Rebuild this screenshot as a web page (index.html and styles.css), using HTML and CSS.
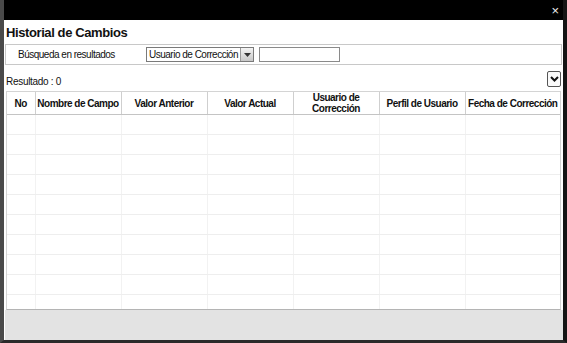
FILE: index.html
```html
<!DOCTYPE html>
<html>
<head>
<meta charset="utf-8">
<link rel="stylesheet" href="styles.css">
</head>
<body>
<div class="frame">
  <div class="titlebar"><span class="close">×</span></div>
  <div class="content">
    <h1 class="title">Historial de Cambios</h1>
    <div class="search">
      <span class="search-label">Búsqueda en resultados</span>
      <div class="select">
        <span class="select-text">Usuario de Corrección</span>
        <span class="select-btn"><svg width="7" height="4" viewBox="0 0 7 4"><path d="M0 0h7L3.5 4z" fill="#333"/></svg></span>
      </div>
      <div class="input"></div>
    </div>
    <div class="result-row">
      <span class="result">Resultado : 0</span>
      <span class="toggle"><svg width="9" height="6" viewBox="0 0 9 6"><path d="M1 1l3.5 3.5L8 1" stroke="#111" stroke-width="2" fill="none"/></svg></span>
    </div>
    <div class="grid-wrap">
      <table class="grid">
        <colgroup>
          <col class="c-no"><col class="c-w"><col class="c-w"><col class="c-w"><col class="c-w"><col class="c-w"><col>
        </colgroup>
        <thead>
          <tr><th>No</th><th>Nombre de Campo</th><th>Valor Anterior</th><th>Valor Actual</th><th>Usuario de<br>Corrección</th><th>Perfil de Usuario</th><th>Fecha de Corrección</th></tr>
        </thead>
        <tbody>
          <tr><td></td><td></td><td></td><td></td><td></td><td></td><td></td></tr>
          <tr><td></td><td></td><td></td><td></td><td></td><td></td><td></td></tr>
          <tr><td></td><td></td><td></td><td></td><td></td><td></td><td></td></tr>
          <tr><td></td><td></td><td></td><td></td><td></td><td></td><td></td></tr>
          <tr><td></td><td></td><td></td><td></td><td></td><td></td><td></td></tr>
          <tr><td></td><td></td><td></td><td></td><td></td><td></td><td></td></tr>
          <tr><td></td><td></td><td></td><td></td><td></td><td></td><td></td></tr>
          <tr><td></td><td></td><td></td><td></td><td></td><td></td><td></td></tr>
          <tr><td></td><td></td><td></td><td></td><td></td><td></td><td></td></tr>
          <tr><td></td><td></td><td></td><td></td><td></td><td></td><td></td></tr>
        </tbody>
      </table>
    </div>
    <div class="footer"></div>
  </div>
</div>
</body>
</html>
```
FILE: styles.css
```css
html, body {
  margin: 0;
  padding: 0;
  background: #1a1a1a;
}
body {
  width: 567px;
  height: 343px;
  overflow: hidden;
  font-family: "Liberation Sans", Arial, sans-serif;
}
.frame {
  box-sizing: border-box;
  height: 343px;
  display: flex;
  flex-direction: column;
  border-left: 4px solid #4a4a4a;
  border-right: 4px solid #151515;
  border-bottom: 3px solid #2a2a2a;
}
.titlebar {
  height: 20px;
  background: #000;
  display: flex;
  justify-content: flex-end;
  align-items: center;
  padding-right: 4px;
}
.close {
  color: #eee;
  font-size: 13px;
  line-height: 13px;
}
.content {
  flex: 1;
  background: #fff;
  display: flex;
  flex-direction: column;
  padding: 0 0 0 1px;
}
.title {
  margin: 4px 0 0 1px;
  font-size: 13px;
  font-weight: bold;
  line-height: 18px;
  color: #111;
  letter-spacing: -0.4px;
}
.search {
  margin: 2px 1px 0 0;
  height: 21px;
  box-sizing: border-box;
  border: 1px solid #c8c8c8;
  display: flex;
  align-items: center;
  font-size: 10px;
  color: #111;
}
.search-label {
  width: 128px;
  padding-left: 12px;
  letter-spacing: -0.5px;
  white-space: nowrap;
}
.select {
  display: flex;
  height: 15px;
  box-sizing: border-box;
  border: 1px solid #7a7a7a;
  align-items: stretch;
}
.select-text {
  width: 91px;
  padding-left: 2px;
  line-height: 13px;
  letter-spacing: -0.5px;
  white-space: nowrap;
  overflow: hidden;
}
.select-btn {
  width: 12px;
  background: linear-gradient(#f4f4f4, #c8c8c8);
  border-left: 1px solid #999;
  display: flex;
  align-items: center;
  justify-content: center;
}
.input {
  margin-left: 5px;
  width: 81px;
  height: 15px;
  box-sizing: border-box;
  border: 1px solid #8a8a8a;
}
.result-row {
  display: flex;
  justify-content: space-between;
  align-items: center;
  margin-top: 5px;
  height: 18px;
  padding-right: 2px;
}
.result {
  font-size: 10px;
  color: #111;
  margin-left: 1px;
  margin-top: 5px;
  letter-spacing: -0.3px;
}
.toggle {
  width: 14px;
  height: 16px;
  margin-top: -1px;
  box-sizing: border-box;
  border: 1px solid #555;
  border-radius: 2px;
  background: #fafafa;
  display: flex;
  align-items: center;
  justify-content: center;
}
.grid-wrap {
  margin: 3px 2px 0 1px;
  height: 219px;
  overflow: hidden;
  border: 1px solid #d4d4d4;
  border-bottom: 1px solid #b4b4b4;
  box-sizing: border-box;
}
.grid {
  width: 100%;
  border-collapse: collapse;
  table-layout: fixed;
}
.c-no { width: 28px; }
.c-w { width: 86px; }
.grid th {
  height: 21px;
  padding: 0;
  font-size: 10px;
  font-weight: bold;
  color: #111;
  line-height: 11px;
  text-align: center;
  border-left: 1px solid #cfcfcf;
  border-bottom: 1px solid #c4c4c4;
  white-space: nowrap;
  letter-spacing: -0.5px;
}
.grid th:first-child { border-left: none; }
.grid td {
  height: 19px;
  padding: 0;
  border-left: 1px solid #f2f2f2;
  border-bottom: 1px solid #eeeeee;
}
.grid td:first-child { border-left: none; }
.footer {
  flex: 1;
  background: #e3e3e3;
}
```
